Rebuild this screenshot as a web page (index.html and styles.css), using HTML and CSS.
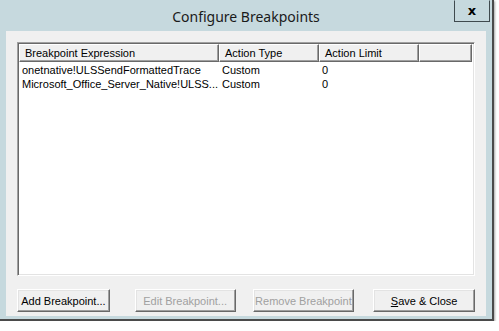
FILE: index.html
```html
<!DOCTYPE html>
<html>
  <head>
    <link rel="stylesheet" href="styles.css">
  </head>
  <body>
    <div class="window">
      <div class="titlebar">
        <span class="title">Configure Breakpoints</span>
        <div class="close-btn">x</div>
      </div>

      <div class="client">
        <div class="list">
          <div class="list-header">
            <div class="col col-expr">Breakpoint Expression</div>
            <div class="col col-type">Action Type</div>
            <div class="col col-limit">Action Limit</div>
            <div class="col col-rest"></div>
          </div>
          <div class="list-row">
            <div class="cell col-expr">onetnative!ULSSendFormattedTrace</div>
            <div class="cell col-type">Custom</div>
            <div class="cell col-limit">0</div>
          </div>
          <div class="list-row">
            <div class="cell col-expr">Microsoft_Office_Server_Native!ULSS...</div>
            <div class="cell col-type">Custom</div>
            <div class="cell col-limit">0</div>
          </div>
        </div>

        <div class="buttons">
          <button class="btn btn-add">Add Breakpoint...</button>
          <button class="btn btn-edit" disabled>Edit Breakpoint...</button>
          <button class="btn btn-remove" disabled>Remove Breakpoint</button>
          <button class="btn btn-save"><u>S</u>ave &amp; Close</button>
        </div>
      </div>
    </div>
  </body>
</html>
```

FILE: styles.css
```css
body {
  margin: 0;
  background: #ffffff;
  font-family: "Liberation Sans", Arial, sans-serif;
  font-size: 11px;
  color: #000;
}
.window {
  width: 492px;
  height: 319px;
  background: #c6d9de;
  border-right: 2px solid #4a4a4a;
  border-bottom: 2px solid #4a4a4a;
  box-shadow: 1px 1px 2px rgba(0, 0, 0, 0.35);
  display: flex;
  flex-direction: column;
}
.titlebar {
  position: relative;
  height: 31px;
  display: flex;
  align-items: center;
  justify-content: center;
}
.title {
  font-family: "Noto Sans", sans-serif;
  font-size: 14px;
  color: #1a1a1a;
  margin-top: 1px;
}
.close-btn {
  position: absolute;
  top: 0;
  right: 2px;
  width: 36px;
  height: 22px;
  border: 1px solid #3f4a4e;
  border-top-color: transparent;
  box-sizing: border-box;
  display: flex;
  align-items: center;
  justify-content: center;
  font-family: "DejaVu Sans", sans-serif;
  font-weight: bold;
  font-size: 13px;
  line-height: 1;
  color: #000;
  padding-bottom: 2px;
}
.client {
  flex: 1;
  margin: 0 6px 3px 6px;
  background: #f0f0f0;
  padding: 11px 11px 0 11px;
}
.list {
  height: 234px;
  box-sizing: border-box;
  background: #fff;
  border: 1px solid;
  border-color: #a0a0a0 #ffffff #ffffff #a0a0a0;
  box-shadow: inset 1px 1px 0 #696969, inset -1px -1px 0 #e3e3e3;
  padding: 1px 2px 0 1px;
}
.list-header {
  display: flex;
  height: 18px;
}
.col {
  box-sizing: border-box;
  height: 18px;
  background: #f0f0f0;
  border: 1px solid;
  border-color: #ffffff #696969 #696969 #ffffff;
  box-shadow: inset -1px -1px 0 #a0a0a0;
  padding: 2px 0 0 5px;
  white-space: nowrap;
}
.col-expr {
  width: 200px;
}
.col-type {
  width: 100px;
}
.col-limit {
  width: 100px;
}
.col-rest {
  flex: 1;
}
.list-row {
  display: flex;
  height: 14px;
  line-height: 14px;
}
.list-header + .list-row {
  margin-top: 1px;
}
.cell {
  box-sizing: border-box;
  padding-left: 3px;
  white-space: nowrap;
}
.buttons {
  display: flex;
  margin-top: 13px;
}
.btn {
  height: 23px;
  box-sizing: border-box;
  font-family: "Liberation Sans", Arial, sans-serif;
  font-size: 11px;
  color: #000;
  background: #f0f0f0;
  border: 1px solid;
  border-color: #ffffff #696969 #696969 #ffffff;
  box-shadow: inset -1px -1px 0 #a0a0a0, inset 1px 1px 0 #e3e3e3;
  padding: 0;
}
.btn:disabled {
  color: #a0a0a0;
}
.btn-add {
  width: 93px;
}
.btn-edit {
  width: 101px;
  margin-left: 25px;
}
.btn-remove {
  width: 102px;
  margin-left: 17px;
}
.btn-save {
  width: 102px;
  margin-left: 19px;
}
```
